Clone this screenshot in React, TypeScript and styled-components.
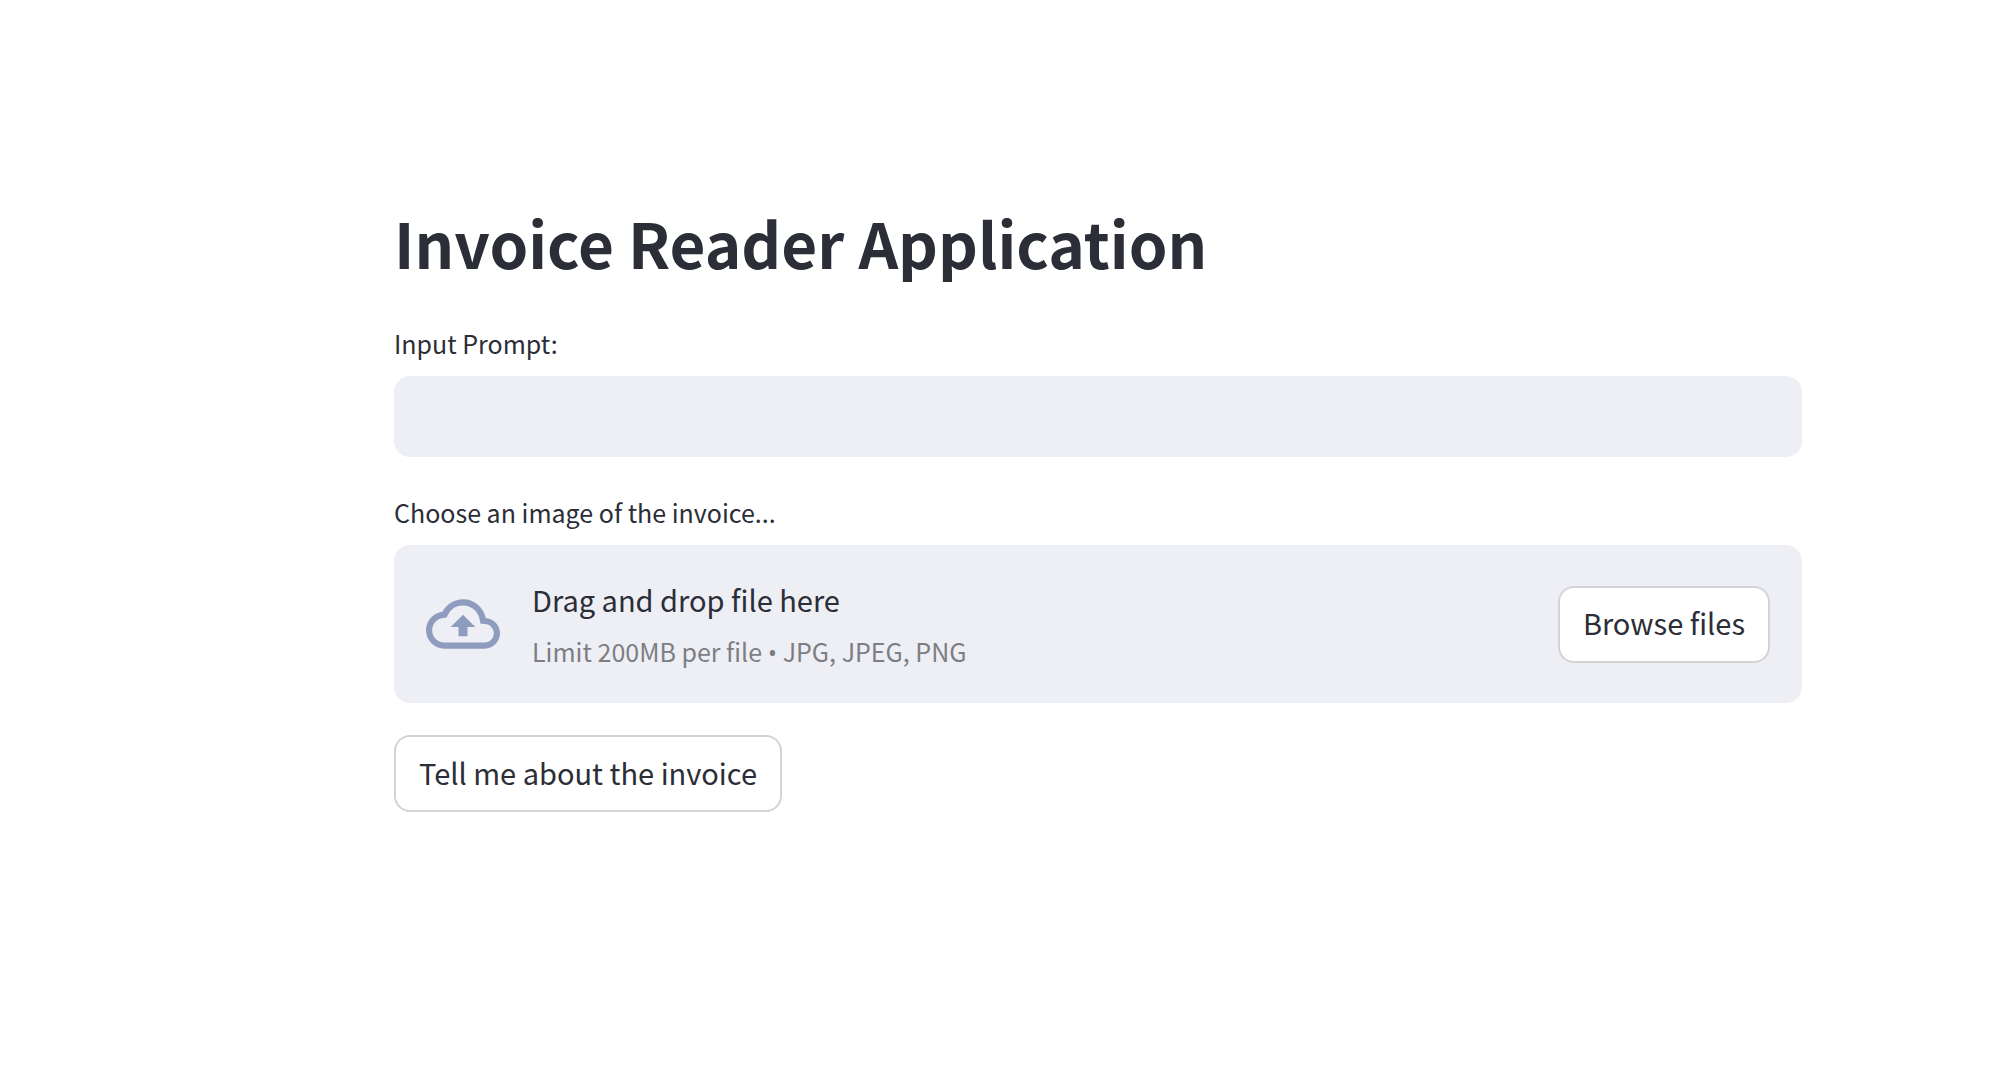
import React, { useId, useState } from "react";
import styled, { createGlobalStyle } from "styled-components";

const GlobalStyle = createGlobalStyle`
  *, *::before, *::after { box-sizing: border-box; }
  body {
    margin: 0;
    background: #ffffff;
    color: #2b2d37;
    font-family: "Noto Sans CJK SC", "Noto Sans", sans-serif;
    font-size: 29px;
    -webkit-font-smoothing: antialiased;
  }
`;

const Page = styled.main`
  display: flex;
  flex-direction: column;
  gap: 32px;
  padding: 196px 190px 64px 394px;
`;

const Title = styled.h1`
  margin: 0;
  font-size: 62px;
  line-height: 92px;
  font-weight: 700;
`;

const Field = styled.div`
  display: flex;
  flex-direction: column;
  gap: 10px;
`;

const Label = styled.label`
  font-size: 25px;
  line-height: 46px;
`;

const TextInput = styled.input`
  height: 81px;
  width: 100%;
  padding: 0 32px;
  border: 0;
  border-radius: 16px;
  background: #eeeff5;
  color: inherit;
  font: inherit;
`;

const Dropzone = styled.section`
  display: flex;
  align-items: center;
  gap: 32px;
  padding: 32px;
  border-radius: 16px;
  background: #eeeff5;
`;

const CloudIcon = styled.svg`
  width: 74px;
  height: 74px;
  flex: none;
  fill: #8e9cbf;
`;

const DropText = styled.div`
  display: flex;
  flex-direction: column;
  flex: 1;
  gap: 12px;
  padding-top: 2px;
`;

const DropTitle = styled.span`
  line-height: 40px;
`;

const DropHint = styled.small`
  font-size: 25px;
  line-height: 40px;
  color: #7d7e83;
`;

const Bullet = styled.span`
  font-family: "Open Sans", sans-serif;
  line-height: 1;
`;

const Button = styled.button<{ $start?: boolean }>`
  align-self: ${(p) => (p.$start ? "flex-start" : "center")};
  height: 77px;
  padding: 0 23px 4px;
  border: 2px solid #d4d4d6;
  border-radius: 16px;
  background: #ffffff;
  color: inherit;
  font: inherit;
  cursor: pointer;
`;

export default function App() {
  const promptId = useId();
  const browseId = useId();
  const [prompt, setPrompt] = useState("");
  return (
    <>
      <GlobalStyle />
      <Page>
        <Title>Invoice Reader Application</Title>
        <Field>
          <Label htmlFor={promptId}>Input Prompt:</Label>
          <TextInput
            id={promptId}
            type="text"
            value={prompt}
            onChange={(e) => setPrompt(e.target.value)}
          />
        </Field>
        <Field>
          <Label htmlFor={browseId}>Choose an image of the invoice...</Label>
          <Dropzone>
            <CloudIcon viewBox="0 0 24 24" aria-hidden="true">
              <path d="M19.35 10.04A7.49 7.49 0 0 0 12 4C9.11 4 6.6 5.64 5.35 8.04A5.994 5.994 0 0 0 0 14c0 3.31 2.69 6 6 6h13c2.76 0 5-2.24 5-5 0-2.64-2.05-4.78-4.65-4.96zM19 18H6c-2.21 0-4-1.79-4-4 0-2.05 1.53-3.76 3.56-3.97l1.07-.11.5-.95A5.469 5.469 0 0 1 12 6c2.62 0 4.88 1.86 5.39 4.43l.3 1.5 1.53.11A2.98 2.98 0 0 1 22 15c0 1.65-1.35 3-3 3zM8 13h2.55v3h2.9v-3H16l-4-4z" />
            </CloudIcon>
            <DropText>
              <DropTitle>Drag and drop file here</DropTitle>
              <DropHint>
                Limit 200MB per file <Bullet>•</Bullet> JPG, JPEG, PNG
              </DropHint>
            </DropText>
            <Button id={browseId} type="button">Browse files</Button>
          </Dropzone>
        </Field>
        <Button $start type="button">Tell me about the invoice</Button>
      </Page>
    </>
  );
}
